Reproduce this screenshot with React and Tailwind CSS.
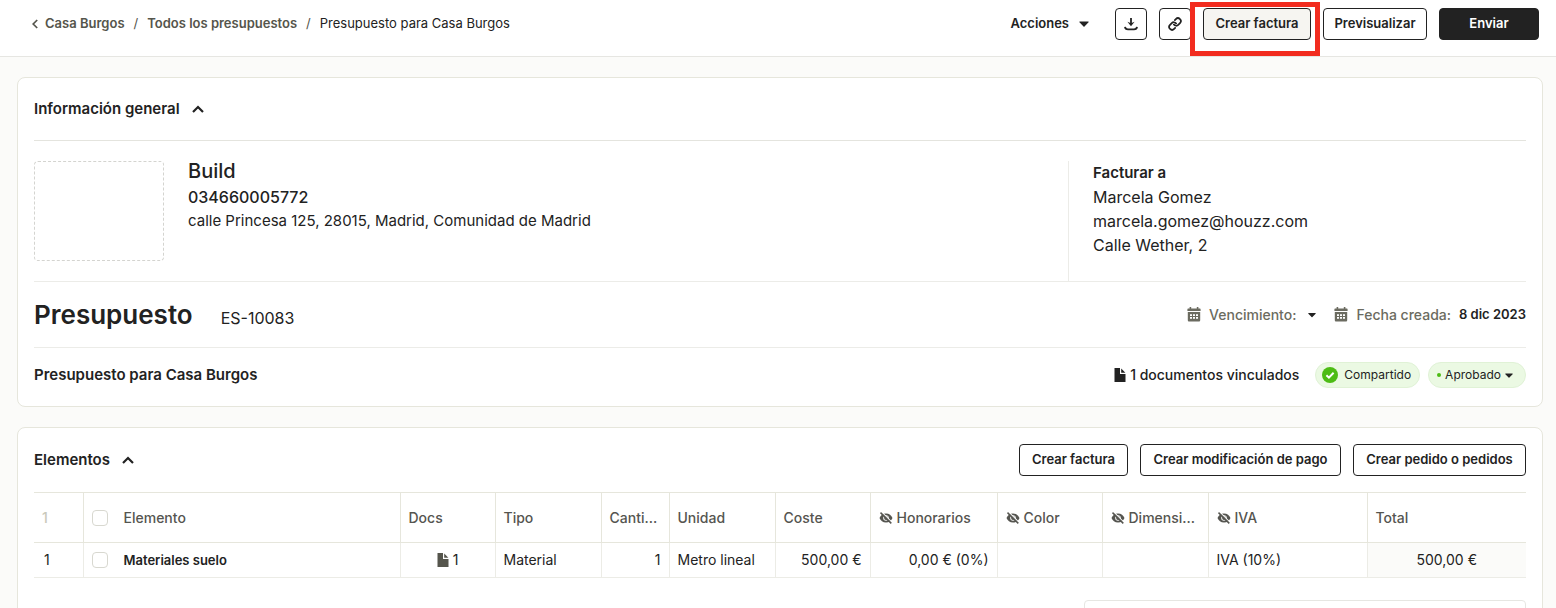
import { useState } from 'react';
import clsx from 'clsx';

function CaretDown({ className }) {
  return (
    <svg viewBox="0 0 10 6" className={clsx('fill-current', className)} aria-hidden="true">
      <path d="M0.8 0.5h8.4a.5.5 0 0 1 .35.85L5.5 5.5a.7.7 0 0 1-1 0L.45 1.35A.5.5 0 0 1 .8.5z" />
    </svg>
  );
}

function ChevronUp({ open }) {
  return (
    <svg
      viewBox="0 0 12 8"
      className={clsx('w-3 h-2 fill-none stroke-current', !open && 'rotate-180')}
      strokeWidth="2.2"
      aria-hidden="true"
    >
      <path d="M1 7 6 2l5 5" />
    </svg>
  );
}

function CalendarIcon() {
  return (
    <svg viewBox="0 0 14 15" className="w-3.5 h-[15px] shrink-0 fill-current" aria-hidden="true">
      <path d="M2.6 0h1.6v1.4h5.6V0h1.6v1.4h1.2c.6 0 1 .4 1 1V4H.4V2.4c0-.6.4-1 1-1h1.2z" />
      <path
        fillRule="evenodd"
        d="M.8 5h12.4v8.2c0 .7-.6 1.3-1.3 1.3H2.1c-.7 0-1.3-.6-1.3-1.3zM3 7.2V9h2V7.2zm3 0V9h2V7.2zm3 0V9h2V7.2zM3 10v1.8h2V10zm3 0v1.8h2V10zm3 0v1.8h2V10z"
      />
    </svg>
  );
}

function DocIcon({ className }) {
  return (
    <svg viewBox="0 0 12 14" className={clsx('w-3 h-3.5 shrink-0 fill-current', className)} aria-hidden="true">
      <path d="M.5 0H6v6h5.5v8H.5z" />
      <path d="M7.2.6l4.2 4.2H7.2z" />
    </svg>
  );
}

function HiddenIcon() {
  return (
    <svg viewBox="0 0 14 12" className="w-3.5 h-3 shrink-0" aria-hidden="true">
      <path
        fill="currentColor"
        fillRule="evenodd"
        d="M7 1.5C3.9 1.5 1.5 3.3.5 6c1 2.7 3.4 4.5 6.5 4.5s5.500-1.800 6.500-4.500C12.500 3.300 10.100 1.500 7 1.500zM7 3.200a2.800 2.800 0 1 1 0 5.600 2.800 2.800 0 0 1 0-5.600z"
      />
      <circle cx="7" cy="6" r="1.9" fill="currentColor" />
      <path d="M2.6 0 13 10.4" stroke="#fff" strokeWidth="1.2" />
      <path d="M1.5.6 12.3 11.4" stroke="currentColor" strokeWidth="1.5" />
    </svg>
  );
}

function DownloadIcon() {
  return (
    <svg viewBox="0 0 14 14" className="w-3.5 h-3.5 fill-none stroke-current" strokeWidth="1.8" aria-hidden="true">
      <path d="M7 1v6.5M1 9.8c.2 1.700 1.200 2.500 3 2.500h6c1.800 0 2.800-.8 3-2.500" />
      <path d="M3.400 4.800 7 6.200l3.600-1.400L7 9.200z" fill="currentColor" stroke="none" />
    </svg>
  );
}

function LinkIcon() {
  return (
    <svg viewBox="0 0 24 24" className="w-3.5 h-3.5 fill-none stroke-current" strokeWidth="3" strokeLinecap="round" aria-hidden="true">
      <path d="M10 13a5 5 0 0 0 7.540.54l3-3a5 5 0 0 0-7.070-7.070l-1.720 1.710" />
      <path d="M14 11a5 5 0 0 0-7.540-.54l-3 3a5 5 0 0 0 7.070 7.070l1.710-1.710" />
    </svg>
  );
}

function CheckBadge() {
  return (
    <svg viewBox="0 0 16 16" className="w-4 h-4" aria-hidden="true">
      <circle cx="8" cy="8" r="8" fill="#4dbc15" />
      <path d="M4.4 8.3l2.5 2.4 4.7-4.9" fill="none" stroke="#fff" strokeWidth="2" />
    </svg>
  );
}

function OutlineButton({ className, children, ...props }) {
  return (
    <button
      type="button"
      className={clsx(
        'h-8 flex items-center justify-center border border-[#222] rounded text-[13px] font-semibold whitespace-nowrap',
        className
      )}
      {...props}
    >
      {children}
    </button>
  );
}

function SectionTitle({ open, onToggle, children }) {
  return (
    <h2 className="text-[15px] font-semibold">
      <button type="button" onClick={onToggle} aria-expanded={open} className="flex items-center gap-3">
        {children}
        <ChevronUp open={open} />
      </button>
    </h2>
  );
}

const columns = [
  { label: 'Docs', width: 'w-[95px]' },
  { label: 'Tipo', width: 'w-[106px]' },
  { label: 'Canti...', width: 'w-[68px]' },
  { label: 'Unidad', width: 'w-[106px]' },
  { label: 'Coste', width: 'w-[95px]' },
  { label: 'Honorarios', width: 'w-[127px]', hidden: true },
  { label: 'Color', width: 'w-[105px]', hidden: true },
  { label: 'Dimensi...', width: 'w-[106px]', hidden: true },
  { label: 'IVA', width: 'w-[159px]', hidden: true },
  { label: 'Total', width: 'w-[159px]' },
];

function RowCheckbox({ label }) {
  return (
    <input
      type="checkbox"
      aria-label={label}
      className="block appearance-none w-4 h-4 shrink-0 rounded border border-[#d8d8d0] bg-white checked:bg-[#222]"
    />
  );
}

function ItemsTable() {
  return (
    <table className="w-full table-fixed border-collapse text-sm">
      <thead>
        <tr className="h-[50px] border-y border-[#e6e6dc] text-[#555550] text-left">
          <th className="w-[49px] pl-2 font-medium text-[#c9c9bb]">1</th>
          <th className="border-l border-[#e6e6dc] px-2 font-medium">
            <div className="flex items-center gap-4">
              <RowCheckbox label="Seleccionar todo" />
              Elemento
            </div>
          </th>
          {columns.map((col) => (
            <th key={col.label} className={clsx('border-l border-[#e6e6dc] px-2 font-medium', col.width)}>
              <div className="flex items-center gap-1 whitespace-nowrap">
                {col.hidden && <HiddenIcon />}
                {col.label}
              </div>
            </th>
          ))}
        </tr>
      </thead>
      <tbody>
        <tr className="h-[35px] border-b border-[#ecece6] *:border-[#ecece6]">
          <td className="pl-2.5">1</td>
          <td className="border-l px-2 text-[13px] font-semibold">
            <div className="flex items-center gap-4">
              <RowCheckbox label="Materiales suelo" />
              Materiales suelo
            </div>
          </td>
          <td className="border-l px-2">
            <div className="flex items-center justify-center gap-1">
              <DocIcon className="text-[#55554c]" />1
            </div>
          </td>
          <td className="border-l px-2">Material</td>
          <td className="border-l px-2 text-right">1</td>
          <td className="border-l px-2">Metro lineal</td>
          <td className="border-l px-2 text-right">500,00 €</td>
          <td className="border-l px-2 text-right">0,00 € (0%)</td>
          <td className="border-l px-2" />
          <td className="border-l px-2" />
          <td className="border-l px-2">IVA (10%)</td>
          <td className="border-l px-2 bg-[#fbfbf9] text-center">500,00 €</td>
        </tr>
      </tbody>
    </table>
  );
}

function TopBar() {
  return (
    <header className="flex items-start justify-between h-[57px] pt-2 pl-8 pr-[17px] bg-white border-b border-[#e6e6e2] text-[13px]">
      <nav aria-label="Ruta" className="flex items-center h-8 gap-[9px] pb-px text-[#55554c]">
        <a href="#proyecto" className="flex items-center gap-[7px] font-semibold">
          <svg viewBox="0 0 6 10" className="w-1.5 h-2.5 fill-none stroke-current" strokeWidth="1.7" aria-hidden="true">
            <path d="M5.2 1 1.2 5l4 4" />
          </svg>
          Casa Burgos
        </a>
        <span>/</span>
        <a href="#presupuestos" className="font-semibold">Todos los presupuestos</a>
        <span>/</span>
        <span className="text-[#222]">Presupuesto para Casa Burgos</span>
      </nav>

      <div className="flex items-center gap-3">
        <button type="button" className="flex items-center gap-2.5 mr-3.5 font-semibold">
          Acciones
          <CaretDown className="w-2.5 h-1.5" />
        </button>
        <OutlineButton className="w-8" aria-label="Descargar">
          <DownloadIcon />
        </OutlineButton>
        <OutlineButton className="w-8" aria-label="Copiar enlace">
          <LinkIcon />
        </OutlineButton>
        <div className="relative">
          <OutlineButton className="w-[108px] bg-[#f6f5f1]">Crear factura</OutlineButton>
          <div className="absolute -top-1.5 -bottom-4 -left-[13px] -right-[9px] border-5 border-[#f22c1f] pointer-events-none" />
        </div>
        <OutlineButton className="w-[104px]">Previsualizar</OutlineButton>
        <OutlineButton className="w-[100px] bg-[#222] text-white">Enviar</OutlineButton>
      </div>
    </header>
  );
}

function GeneralInfo() {
  const [open, setOpen] = useState(true);

  return (
    <section className="px-4 bg-white border border-[#e6e6dc] rounded-lg">
      <div className="flex items-center h-[62px]">
        <SectionTitle open={open} onToggle={() => setOpen(!open)}>Información general</SectionTitle>
      </div>

      {open && (
        <div className="flex pt-5 border-t border-[#e4e4de]">
          <div className="w-[130px] h-[100px] mb-5 rounded border border-dashed border-[#d4d4d0]" />
          <div className="flex-1 pl-6">
            <h3 className="text-xl leading-5 font-medium">Build</h3>
            <p className="mt-1 leading-6 font-medium">034660005772</p>
            <p className="text-[15px] leading-6">calle Princesa 125, 28015, Madrid, Comunidad de Madrid</p>
          </div>
          <address className="w-[458px] pl-6 border-l border-[#ecece8] leading-6 not-italic">
            <p className="text-[15px] leading-6 font-semibold">Facturar a</p>
            <p>Marcela Gomez</p>
            <p>marcela.gomez@houzz.com</p>
            <p>Calle Wether, 2</p>
          </address>
        </div>
      )}

      <div className="flex items-center justify-between h-[67px] border-y border-[#ecece8]">
        <div className="flex items-baseline gap-7">
          <h1 className="text-[26px] font-semibold">Presupuesto</h1>
          <span>ES-10083</span>
        </div>
        <div className="flex items-center gap-[18px] text-sm font-medium text-[#6b6b60]">
          <button type="button" className="flex items-center gap-2">
            <CalendarIcon />
            Vencimiento:
            <CaretDown className="w-2 h-1.5 ml-1 text-[#222]" />
          </button>
          <div className="flex items-center gap-2">
            <CalendarIcon />
            Fecha creada:
            <span className="text-[13px] font-semibold text-[#222]">8 dic 2023</span>
          </div>
        </div>
      </div>

      <div className="flex items-center justify-between h-[58px] pb-1">
        <h2 className="text-[15px] font-semibold">Presupuesto para Casa Burgos</h2>
        <div className="flex items-center gap-2">
          <a href="#documentos" className="flex items-center gap-1 mr-2 text-sm font-medium">
            <DocIcon />
            1 documentos vinculados
          </a>
          <span className="flex items-center gap-1.5 h-6.5 pl-1.5 pr-2 rounded-full border border-[#e0f2d6] bg-[#ebf9e3] text-xs">
            <CheckBadge />
            Compartido
          </span>
          <button type="button" className="flex items-center gap-1 h-6.5 pl-2 pr-3 rounded-full border border-[#e0f2d6] bg-[#ebf9e3] text-xs">
            <span className="w-1 h-1 rounded-full bg-[#4dbc15]" />
            Aprobado
            <CaretDown className="w-2 h-[5px]" />
          </button>
        </div>
      </div>
    </section>
  );
}

function Items() {
  const [open, setOpen] = useState(true);

  return (
    <section className="px-4 pb-6 bg-white border border-[#e6e6dc] rounded-lg">
      <div className="flex items-center justify-between h-16">
        <SectionTitle open={open} onToggle={() => setOpen(!open)}>Elementos</SectionTitle>
        <div className="flex gap-3">
          <OutlineButton className="w-[109px]">Crear factura</OutlineButton>
          <OutlineButton className="w-[201px]">Crear modificación de pago</OutlineButton>
          <OutlineButton className="w-[173px]">Crear pedido o pedidos</OutlineButton>
        </div>
      </div>
      {open && <ItemsTable />}
      <div className="h-40 w-[442px] mt-[22px] ml-auto rounded border border-[#e6e6e2]" />
    </section>
  );
}

export default function App() {
  return (
    <div className="h-screen overflow-hidden bg-[#fbfbf9] font-[Inter,sans-serif] text-[#222]">
      <TopBar />
      <main className="flex flex-col gap-5 pt-5 pl-[17px] pr-[13px]">
        <GeneralInfo />
        <Items />
      </main>
    </div>
  );
}
